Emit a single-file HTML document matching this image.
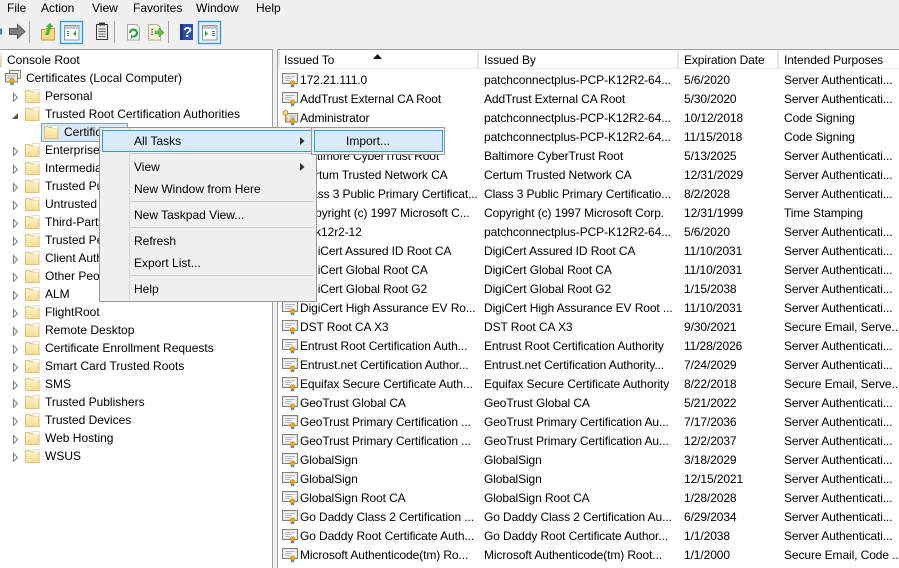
<!DOCTYPE html>
<html><head><meta charset="utf-8"><style>
html,body{margin:0;padding:0}
body{width:899px;height:567px;overflow:hidden;position:relative;background:#f0f0f0;font:12px "Liberation Sans",sans-serif;color:#000}
.t{position:absolute;white-space:nowrap;line-height:16px;height:16px}
.i{position:absolute;width:16px;height:16px}
.b{position:absolute}
.a{position:absolute;width:10px;height:10px}
.w{position:absolute;left:0;letter-spacing:-.1px}
</style></head><body>
<svg width="0" height="0" style="position:absolute">
<defs>
<linearGradient id="g" x1="0" y1="0" x2="0" y2="1"><stop offset="0" stop-color="#fff3c9"/><stop offset="1" stop-color="#f9dd94"/></linearGradient>
<symbol id="c" viewBox="0 0 16 16"><rect x=".5" y="1.500" width="15" height="10" fill="#e9e5d6" stroke="#80807c"/><rect x="2" y="3" width="12" height="7" fill="#fafafc"/><path d="M3 4.500h10M3 6.500h7M3 8.500h5" stroke="#a9b5de"/><path d="M8.500 12l.5 3.500 1.500-1 1.500 1 .5-3.500z" fill="#3a7bdc"/><circle cx="10.500" cy="11" r="2.400" fill="#e9a81e" stroke="#c08a1c" stroke-width=".6"/></symbol>
<symbol id="k" viewBox="0 0 16 16"><rect x="3.500" y="3.500" width="12" height="8.500" fill="#e9e5d6" stroke="#80807c"/><path d="M7 6h7M8 8h5M8 10h2" stroke="#a9b5de"/><path d="M8.500 12l.5 3.500 1.500-1 1.500 1 .5-3.500z" fill="#3a7bdc"/><circle cx="10.500" cy="11" r="2.400" fill="#e9a81e" stroke="#c08a1c" stroke-width=".6"/><circle cx="3.500" cy="2.800" r="2.300" fill="#fbe6a0" stroke="#b58a24"/><path d="M3.500 5v6M3.500 8h2M3.500 10h2" stroke="#b58a24"/></symbol>
<symbol id="m" viewBox="0 0 16 16"><rect x="4.500" y=".5" width="11" height="8" fill="#f4f1e6" stroke="#80807c"/><rect x=".5" y="3.500" width="12" height="8.500" fill="#e9e5d6" stroke="#80807c"/><path d="M2.500 6h8M2.500 8h6" stroke="#a9b5de"/><path d="M5 12l.5 3.500 1.500-1 1.500 1 .5-3.500z" fill="#3a7bdc"/><circle cx="7" cy="11" r="2.400" fill="#e9a81e" stroke="#c08a1c" stroke-width=".6"/></symbol>
<symbol id="f" viewBox="0 0 16 16"><path d="M.5 14.500V2.500h4l1 1h8.500v11z" fill="url(#g)" stroke="#d9bf80"/><path d="M8 1.500h6v3H8z" fill="#fff" stroke="#dccb9a" stroke-width=".7"/><path d="M1 5h13" stroke="#fdf0c4"/></symbol>
<symbol id="o" viewBox="0 0 10 10"><path d="M3.500 1.500L7.500 5.500 3.500 9.500z" fill="#fff" stroke="#808080"/></symbol>
<symbol id="e" viewBox="0 0 10 10"><path d="M8 3v6H2z" fill="#595959"/></symbol>
</defs></svg>

<!-- menu bar -->
<div class="t" style="left:7px;top:0">File</div>
<div class="t" style="left:41px;top:0">Action</div>
<div class="t" style="left:92px;top:0">View</div>
<div class="t" style="left:133px;top:0">Favorites</div>
<div class="t" style="left:196px;top:0">Window</div>
<div class="t" style="left:256px;top:0">Help</div>

<!-- toolbar -->
<svg class="b" style="left:0;top:17px" width="240" height="30" viewBox="0 17 240 30">
<path d="M0 28.500h2v6H0z" fill="#3a86d0"/>
<path d="M9.500 28.500h8v-4l7.500 7-7.500 7v-4h-8z" fill="#808080" stroke="#585858"/>
<rect x="29" y="21" width="1" height="22" fill="#a0a0a0"/>
<path d="M41.500 29.500h4l1-1h8v11.500h-13z" fill="#f6d98a" stroke="#c5a04a"/>
<path d="M45 35l3-8-2.500 0 4.500-4 3.500 4-2 0-3 8z" fill="#4bb53c"/>
<rect x="60.500" y="21.500" width="22" height="22" fill="#e5f1fb" stroke="#3a9edc" stroke-width="1.400"/>
<rect x="64.500" y="25.500" width="14.500" height="14.500" fill="#fff" stroke="#8d969e"/><rect x="65" y="26" width="14" height="3" fill="#c3c9cf"/>
<path d="M67 31.500h2M67 33.500h2M67 35.500h2" stroke="#3b6fb5"/><path d="M76 30.500v6l-3-3z" fill="#2fa43a"/>
<rect x="96.500" y="24.500" width="11" height="15" fill="#e8e8e8" stroke="#3a3a3a"/><rect x="99" y="22.500" width="6" height="3" fill="#3a3a3a"/><path d="M98.500 29h7M98.500 31.500h7M98.500 34h7M98.500 36.500h7" stroke="#666"/>
<rect x="114" y="21" width="1" height="22" fill="#a0a0a0"/>
<path d="M127.500 24.500h9l3 3v12.500h-12z" fill="#f8f8f8" stroke="#a8a8a8"/>
<path d="M130 33a3.500 3.500 0 1 1 3.500 3.500" fill="none" stroke="#2da23a" stroke-width="2.200"/><path d="M131 39l3-2.500-3-2z" fill="#2da23a"/>
<path d="M148.500 24.500h9l3 3v12.500h-12z" fill="#fbf4d8" stroke="#b5ac8a"/><path d="M151 29.500h2M151 32h2M151 34.500h2" stroke="#555"/>
<path d="M155 31h4v-3l5 4.500-5 4.500v-3h-4z" fill="#62c14a" stroke="#3c9a2c" stroke-width=".6"/>
<rect x="168" y="21" width="1" height="22" fill="#a0a0a0"/>
<rect x="180" y="24" width="13" height="16" fill="#2c4fb0"/><path d="M180 24h3v16h-3z" fill="#1c3780"/>
<text x="183" y="37" font-family="Liberation Sans" font-size="15" font-weight="bold" fill="#fff">?</text>
<rect x="198.500" y="21.500" width="22" height="22" fill="#e5f1fb" stroke="#3a9edc" stroke-width="1.400"/>
<rect x="202.500" y="25.500" width="14.500" height="14.500" fill="#fff" stroke="#8d969e"/><rect x="203" y="26" width="14" height="3" fill="#c3c9cf"/>
<path d="M212 31.500h3M212 33.500h3M212 35.500h3" stroke="#3b6fb5"/><path d="M205 30.500v6l3-3z" fill="#2fa43a"/>
</svg>

<!-- panes -->
<div class="b" style="left:0;top:49px;width:272px;height:518px;background:#fff;border-top:1px solid #a0a0a0;border-right:1px solid #a0a0a0"></div>
<div class="b" style="left:277px;top:49px;width:622px;height:518px;background:#fff;border-top:1px solid #a0a0a0;border-left:1px solid #a0a0a0"></div>

<!-- tree -->
<svg class="i" style="left:-13px;top:52px"><use href="#f"/></svg>
<div class="t" style="left:7px;top:52px">Console Root</div>
<svg class="i" style="left:5px;top:70px"><use href="#m"/></svg>
<div class="t" style="left:26px;top:70px">Certificates (Local Computer)</div>
<svg class="a" style="left:10px;top:92px"><use href="#o"/></svg><svg class="i" style="left:25px;top:88px"><use href="#f"/></svg><div class="t" style="left:45px;top:88px">Personal</div>
<svg class="a" style="left:10px;top:110px"><use href="#e"/></svg><svg class="i" style="left:25px;top:106px"><use href="#f"/></svg><div class="t" style="left:45px;top:106px">Trusted Root Certification Authorities</div>
<div class="b" style="left:41px;top:123px;width:85px;height:17px;background:#d9e9f8;border:1px solid #7da2ce"></div>
<svg class="i" style="left:44px;top:124px"><use href="#f"/></svg><div class="t" style="left:64px;top:124px">Certificates</div>
<svg class="a" style="left:10px;top:146px"><use href="#o"/></svg><svg class="i" style="left:25px;top:142px"><use href="#f"/></svg><div class="t" style="left:45px;top:142px">Enterprise Trust</div>
<svg class="a" style="left:10px;top:164px"><use href="#o"/></svg><svg class="i" style="left:25px;top:160px"><use href="#f"/></svg><div class="t" style="left:45px;top:160px">Intermediate</div>
<svg class="a" style="left:10px;top:182px"><use href="#o"/></svg><svg class="i" style="left:25px;top:178px"><use href="#f"/></svg><div class="t" style="left:45px;top:178px">Trusted Publishers</div>
<svg class="a" style="left:10px;top:200px"><use href="#o"/></svg><svg class="i" style="left:25px;top:196px"><use href="#f"/></svg><div class="t" style="left:45px;top:196px">Untrusted</div>
<svg class="a" style="left:10px;top:218px"><use href="#o"/></svg><svg class="i" style="left:25px;top:214px"><use href="#f"/></svg><div class="t" style="left:45px;top:214px">Third-Party</div>
<svg class="a" style="left:10px;top:236px"><use href="#o"/></svg><svg class="i" style="left:25px;top:232px"><use href="#f"/></svg><div class="t" style="left:45px;top:232px">Trusted People</div>
<svg class="a" style="left:10px;top:254px"><use href="#o"/></svg><svg class="i" style="left:25px;top:250px"><use href="#f"/></svg><div class="t" style="left:45px;top:250px">Client Authentication</div>
<svg class="a" style="left:10px;top:272px"><use href="#o"/></svg><svg class="i" style="left:25px;top:268px"><use href="#f"/></svg><div class="t" style="left:45px;top:268px">Other People</div>
<svg class="a" style="left:10px;top:290px"><use href="#o"/></svg><svg class="i" style="left:25px;top:286px"><use href="#f"/></svg><div class="t" style="left:45px;top:286px">ALM</div>
<svg class="a" style="left:10px;top:308px"><use href="#o"/></svg><svg class="i" style="left:25px;top:304px"><use href="#f"/></svg><div class="t" style="left:45px;top:304px">FlightRoot</div>
<svg class="a" style="left:10px;top:326px"><use href="#o"/></svg><svg class="i" style="left:25px;top:322px"><use href="#f"/></svg><div class="t" style="left:45px;top:322px">Remote Desktop</div>
<svg class="a" style="left:10px;top:344px"><use href="#o"/></svg><svg class="i" style="left:25px;top:340px"><use href="#f"/></svg><div class="t" style="left:45px;top:340px">Certificate Enrollment Requests</div>
<svg class="a" style="left:10px;top:362px"><use href="#o"/></svg><svg class="i" style="left:25px;top:358px"><use href="#f"/></svg><div class="t" style="left:45px;top:358px">Smart Card Trusted Roots</div>
<svg class="a" style="left:10px;top:380px"><use href="#o"/></svg><svg class="i" style="left:25px;top:376px"><use href="#f"/></svg><div class="t" style="left:45px;top:376px">SMS</div>
<svg class="a" style="left:10px;top:398px"><use href="#o"/></svg><svg class="i" style="left:25px;top:394px"><use href="#f"/></svg><div class="t" style="left:45px;top:394px">Trusted Publishers</div>
<svg class="a" style="left:10px;top:416px"><use href="#o"/></svg><svg class="i" style="left:25px;top:412px"><use href="#f"/></svg><div class="t" style="left:45px;top:412px">Trusted Devices</div>
<svg class="a" style="left:10px;top:434px"><use href="#o"/></svg><svg class="i" style="left:25px;top:430px"><use href="#f"/></svg><div class="t" style="left:45px;top:430px">Web Hosting</div>
<svg class="a" style="left:10px;top:452px"><use href="#o"/></svg><svg class="i" style="left:25px;top:448px"><use href="#f"/></svg><div class="t" style="left:45px;top:448px">WSUS</div>

<!-- list header -->
<div class="b" style="left:278px;top:50px;width:621px;height:18px;background:#fff;border-bottom:1px solid #ececec"></div>
<div class="b" style="left:278px;top:50px;width:2px;height:19px;background:#ececec"></div>
<div class="b" style="left:477px;top:50px;width:2px;height:19px;background:#e5e5e5"></div>
<div class="b" style="left:677px;top:50px;width:2px;height:19px;background:#e5e5e5"></div>
<div class="b" style="left:777px;top:50px;width:2px;height:19px;background:#e5e5e5"></div>
<svg class="b" style="left:373px;top:54px" width="9" height="5"><path d="M0 5L4.500 0 9 5z" fill="#111"/></svg>
<div class="w" style="top:-1px">
<div class="t" style="left:284px;top:53px">Issued To</div>
<div class="t" style="left:484px;top:53px">Issued By</div>
<div class="t" style="left:684px;top:53px">Expiration Date</div>
<div class="t" style="left:784px;top:53px">Intended Purposes</div>
</div>

<!-- rows -->
<div class="w" style="top:1px">
<svg class="i" style="left:282px;top:71px"><use href="#c"/></svg><div class="t" style="left:300px;top:71px">172.21.111.0</div><div class="t" style="left:484px;top:71px">patchconnectplus-PCP-K12R2-64...</div><div class="t" style="left:684px;top:71px">5/6/2020</div><div class="t" style="left:784px;top:71px">Server Authenticati...</div>
<svg class="i" style="left:282px;top:90px"><use href="#c"/></svg><div class="t" style="left:300px;top:90px">AddTrust External CA Root</div><div class="t" style="left:484px;top:90px">AddTrust External CA Root</div><div class="t" style="left:684px;top:90px">5/30/2020</div><div class="t" style="left:784px;top:90px">Server Authenticati...</div>
<svg class="i" style="left:282px;top:109px"><use href="#k"/></svg><div class="t" style="left:300px;top:109px">Administrator</div><div class="t" style="left:484px;top:109px">patchconnectplus-PCP-K12R2-64...</div><div class="t" style="left:684px;top:109px">10/12/2018</div><div class="t" style="left:784px;top:109px">Code Signing</div>
<svg class="i" style="left:282px;top:128px"><use href="#k"/></svg><div class="t" style="left:484px;top:128px">patchconnectplus-PCP-K12R2-64...</div><div class="t" style="left:684px;top:128px">11/15/2018</div><div class="t" style="left:784px;top:128px">Code Signing</div>
<div class="t" style="left:300px;top:147px">Baltimore CyberTrust Root</div><div class="t" style="left:484px;top:147px">Baltimore CyberTrust Root</div><div class="t" style="left:684px;top:147px">5/13/2025</div><div class="t" style="left:784px;top:147px">Server Authenticati...</div>
<div class="t" style="left:300px;top:166px">Certum Trusted Network CA</div><div class="t" style="left:484px;top:166px">Certum Trusted Network CA</div><div class="t" style="left:684px;top:166px">12/31/2029</div><div class="t" style="left:784px;top:166px">Server Authenticati...</div>
<div class="t" style="left:300px;top:185px">Class 3 Public Primary Certificat...</div><div class="t" style="left:484px;top:185px">Class 3 Public Primary Certificatio...</div><div class="t" style="left:684px;top:185px">8/2/2028</div><div class="t" style="left:784px;top:185px">Server Authenticati...</div>
<div class="t" style="left:300px;top:204px">Copyright (c) 1997 Microsoft C...</div><div class="t" style="left:484px;top:204px">Copyright (c) 1997 Microsoft Corp.</div><div class="t" style="left:684px;top:204px">12/31/1999</div><div class="t" style="left:784px;top:204px">Time Stamping</div>
<div class="t" style="left:300px;top:223px">w2k12r2-12</div><div class="t" style="left:484px;top:223px">patchconnectplus-PCP-K12R2-64...</div><div class="t" style="left:684px;top:223px">5/6/2020</div><div class="t" style="left:784px;top:223px">Server Authenticati...</div>
<div class="t" style="left:300px;top:242px">DigiCert Assured ID Root CA</div><div class="t" style="left:484px;top:242px">DigiCert Assured ID Root CA</div><div class="t" style="left:684px;top:242px">11/10/2031</div><div class="t" style="left:784px;top:242px">Server Authenticati...</div>
<div class="t" style="left:300px;top:261px">DigiCert Global Root CA</div><div class="t" style="left:484px;top:261px">DigiCert Global Root CA</div><div class="t" style="left:684px;top:261px">11/10/2031</div><div class="t" style="left:784px;top:261px">Server Authenticati...</div>
<div class="t" style="left:300px;top:280px">DigiCert Global Root G2</div><div class="t" style="left:484px;top:280px">DigiCert Global Root G2</div><div class="t" style="left:684px;top:280px">1/15/2038</div><div class="t" style="left:784px;top:280px">Server Authenticati...</div>
<svg class="i" style="left:282px;top:299px"><use href="#c"/></svg><div class="t" style="left:300px;top:299px">DigiCert High Assurance EV Ro...</div><div class="t" style="left:484px;top:299px">DigiCert High Assurance EV Root ...</div><div class="t" style="left:684px;top:299px">11/10/2031</div><div class="t" style="left:784px;top:299px">Server Authenticati...</div>
<svg class="i" style="left:282px;top:318px"><use href="#c"/></svg><div class="t" style="left:300px;top:318px">DST Root CA X3</div><div class="t" style="left:484px;top:318px">DST Root CA X3</div><div class="t" style="left:684px;top:318px">9/30/2021</div><div class="t" style="left:784px;top:318px">Secure Email, Serve...</div>
<svg class="i" style="left:282px;top:337px"><use href="#c"/></svg><div class="t" style="left:300px;top:337px">Entrust Root Certification Auth...</div><div class="t" style="left:484px;top:337px">Entrust Root Certification Authority</div><div class="t" style="left:684px;top:337px">11/28/2026</div><div class="t" style="left:784px;top:337px">Server Authenticati...</div>
<svg class="i" style="left:282px;top:356px"><use href="#c"/></svg><div class="t" style="left:300px;top:356px">Entrust.net Certification Author...</div><div class="t" style="left:484px;top:356px">Entrust.net Certification Authority...</div><div class="t" style="left:684px;top:356px">7/24/2029</div><div class="t" style="left:784px;top:356px">Server Authenticati...</div>
<svg class="i" style="left:282px;top:375px"><use href="#c"/></svg><div class="t" style="left:300px;top:375px">Equifax Secure Certificate Auth...</div><div class="t" style="left:484px;top:375px">Equifax Secure Certificate Authority</div><div class="t" style="left:684px;top:375px">8/22/2018</div><div class="t" style="left:784px;top:375px">Secure Email, Serve...</div>
<svg class="i" style="left:282px;top:394px"><use href="#c"/></svg><div class="t" style="left:300px;top:394px">GeoTrust Global CA</div><div class="t" style="left:484px;top:394px">GeoTrust Global CA</div><div class="t" style="left:684px;top:394px">5/21/2022</div><div class="t" style="left:784px;top:394px">Server Authenticati...</div>
<svg class="i" style="left:282px;top:413px"><use href="#c"/></svg><div class="t" style="left:300px;top:413px">GeoTrust Primary Certification ...</div><div class="t" style="left:484px;top:413px">GeoTrust Primary Certification Au...</div><div class="t" style="left:684px;top:413px">7/17/2036</div><div class="t" style="left:784px;top:413px">Server Authenticati...</div>
<svg class="i" style="left:282px;top:432px"><use href="#c"/></svg><div class="t" style="left:300px;top:432px">GeoTrust Primary Certification ...</div><div class="t" style="left:484px;top:432px">GeoTrust Primary Certification Au...</div><div class="t" style="left:684px;top:432px">12/2/2037</div><div class="t" style="left:784px;top:432px">Server Authenticati...</div>
<svg class="i" style="left:282px;top:451px"><use href="#c"/></svg><div class="t" style="left:300px;top:451px">GlobalSign</div><div class="t" style="left:484px;top:451px">GlobalSign</div><div class="t" style="left:684px;top:451px">3/18/2029</div><div class="t" style="left:784px;top:451px">Server Authenticati...</div>
<svg class="i" style="left:282px;top:470px"><use href="#c"/></svg><div class="t" style="left:300px;top:470px">GlobalSign</div><div class="t" style="left:484px;top:470px">GlobalSign</div><div class="t" style="left:684px;top:470px">12/15/2021</div><div class="t" style="left:784px;top:470px">Server Authenticati...</div>
<svg class="i" style="left:282px;top:489px"><use href="#c"/></svg><div class="t" style="left:300px;top:489px">GlobalSign Root CA</div><div class="t" style="left:484px;top:489px">GlobalSign Root CA</div><div class="t" style="left:684px;top:489px">1/28/2028</div><div class="t" style="left:784px;top:489px">Server Authenticati...</div>
<svg class="i" style="left:282px;top:508px"><use href="#c"/></svg><div class="t" style="left:300px;top:508px">Go Daddy Class 2 Certification ...</div><div class="t" style="left:484px;top:508px">Go Daddy Class 2 Certification Au...</div><div class="t" style="left:684px;top:508px">6/29/2034</div><div class="t" style="left:784px;top:508px">Server Authenticati...</div>
<svg class="i" style="left:282px;top:527px"><use href="#c"/></svg><div class="t" style="left:300px;top:527px">Go Daddy Root Certificate Auth...</div><div class="t" style="left:484px;top:527px">Go Daddy Root Certificate Author...</div><div class="t" style="left:684px;top:527px">1/1/2038</div><div class="t" style="left:784px;top:527px">Server Authenticati...</div>
<svg class="i" style="left:282px;top:546px"><use href="#c"/></svg><div class="t" style="left:300px;top:546px">Microsoft Authenticode(tm) Ro...</div><div class="t" style="left:484px;top:546px">Microsoft Authenticode(tm) Root...</div><div class="t" style="left:684px;top:546px">1/1/2000</div><div class="t" style="left:784px;top:546px">Secure Email, Code ...</div>
</div>

<!-- context menu -->
<div class="b" style="left:99px;top:127px;width:216px;height:173px;background:#f0f0f0;border:1px solid #979797"></div>
<div class="b" style="left:129px;top:128px;width:1px;height:172px;background:#d4d4d4"></div>
<div class="b" style="left:102px;top:130px;width:208px;height:20px;background:#d9ebfb;border:1px solid #26a0da"></div>
<div class="t" style="left:134px;top:133px">All Tasks</div>
<svg class="b" style="left:300px;top:137px" width="5" height="8"><path d="M0 0L4.500 4 0 8z" fill="#333"/></svg>
<div class="b" style="left:130px;top:153px;width:184px;height:1px;background:#d0d0d0"></div>
<div class="t" style="left:134px;top:159px">View</div>
<svg class="b" style="left:300px;top:163px" width="5" height="8"><path d="M0 0L4.500 4 0 8z" fill="#333"/></svg>
<div class="t" style="left:134px;top:181px">New Window from Here</div>
<div class="b" style="left:130px;top:201px;width:184px;height:1px;background:#d0d0d0"></div>
<div class="t" style="left:134px;top:207px">New Taskpad View...</div>
<div class="b" style="left:130px;top:227px;width:184px;height:1px;background:#d0d0d0"></div>
<div class="t" style="left:134px;top:233px">Refresh</div>
<div class="t" style="left:134px;top:255px">Export List...</div>
<div class="b" style="left:130px;top:275px;width:184px;height:1px;background:#d0d0d0"></div>
<div class="t" style="left:134px;top:281px">Help</div>

<!-- submenu -->
<div class="b" style="left:311px;top:127px;width:132px;height:26px;background:#f0f0f0;border:1px solid #979797"></div>
<div class="b" style="left:314px;top:130px;width:127px;height:20px;background:#d9ebfb;border:1px solid #26a0da"></div>
<div class="t" style="left:346px;top:133px">Import...</div>
</body></html>
